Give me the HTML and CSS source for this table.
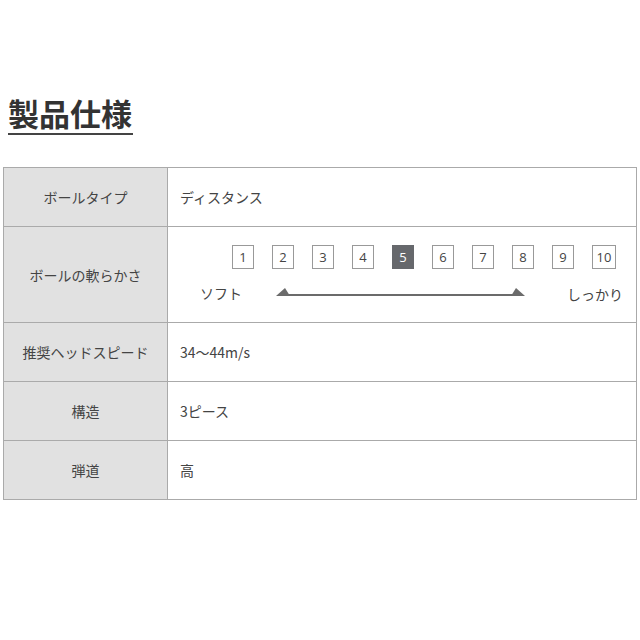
FILE: index.html
```html
<!DOCTYPE html>
<html lang="ja">
<head>
<meta charset="utf-8">
<link rel="stylesheet" href="styles.css">
</head>
<body>
<div class="page">
  <h2 class="title">製品仕様</h2>
  <table class="spec">
    <tr class="row">
      <th class="label">ボールタイプ</th>
      <td class="value">ディスタンス</td>
    </tr>
    <tr class="row row-tall">
      <th class="label">ボールの軟らかさ</th>
      <td class="value value-scale">
        <div class="boxes">
          <span class="box">1</span>
          <span class="box">2</span>
          <span class="box">3</span>
          <span class="box">4</span>
          <span class="box box-on">5</span>
          <span class="box">6</span>
          <span class="box">7</span>
          <span class="box">8</span>
          <span class="box">9</span>
          <span class="box box-wide">10</span>
        </div>
        <div class="scale">
          <span class="scale-soft">ソフト</span>
          <svg class="arrow" width="249" height="10" viewBox="0 0 249 10">
            <line x1="8" y1="8" x2="241" y2="8" stroke="#6b6b6b" stroke-width="2"/>
            <polygon points="0,9 9,1 14,9" fill="#6b6b6b"/>
            <polygon points="249,9 240,1 235,9" fill="#6b6b6b"/>
          </svg>
          <span class="scale-hard">しっかり</span>
        </div>
      </td>
    </tr>
    <tr class="row">
      <th class="label">推奨ヘッドスピード</th>
      <td class="value">34〜44m/s</td>
    </tr>
    <tr class="row">
      <th class="label">構造</th>
      <td class="value">3ピース</td>
    </tr>
    <tr class="row">
      <th class="label">弾道</th>
      <td class="value">高</td>
    </tr>
  </table>
</div>
</body>
</html>
```

FILE: styles.css
```css
html, body {
  margin: 0;
  padding: 0;
  background: #fff;
}
body {
  font-family: "Noto Sans CJK JP", "Noto Sans", sans-serif;
  color: #333;
}
.page {
  padding: 93px 0 0 3px;
}
.title {
  display: inline-block;
  margin: 0 0 32px 5px;
  padding: 0 1px 0 0;
  font-size: 31px;
  line-height: 40px;
  font-weight: 700;
  color: #333;
  border-bottom: 2px solid #444;
  letter-spacing: 0;
}
.spec {
  width: 634px;
  border-collapse: collapse;
  font-size: 14px;
}
.spec th, .spec td {
  border: 1px solid #aaa;
  padding: 0;
  font-weight: 400;
}
.row {
  height: 59px;
}
.row-tall {
  height: 96px;
}
.label {
  width: 163px;
  background: #e1e1e1;
  text-align: center;
  color: #444;
}
.value {
  padding-left: 12px !important;
  text-align: left;
  color: #444;
}
.value-scale {
  padding: 0 !important;
}
.boxes {
  display: flex;
  gap: 18px;
  padding: 3px 0 0 64px;
}
.box {
  width: 20px;
  height: 22px;
  border: 1px solid #999;
  display: flex;
  align-items: center;
  justify-content: center;
  font-family: "Open Sans", "Noto Sans", sans-serif;
  font-size: 13px;
  color: #444;
}
.box-wide {
  width: 22px;
}
.box-on {
  background: #66686c;
  border-color: #66686c;
  color: #fff;
}
.scale {
  display: flex;
  align-items: center;
  padding: 9px 0 0 32px;
  height: 30px;
}
.scale-soft {
  width: 76px;
}
.arrow {
  display: block;
  margin-top: -2px;
}
.scale-hard {
  margin-left: 42px;
  padding-top: 2px;
}
```
